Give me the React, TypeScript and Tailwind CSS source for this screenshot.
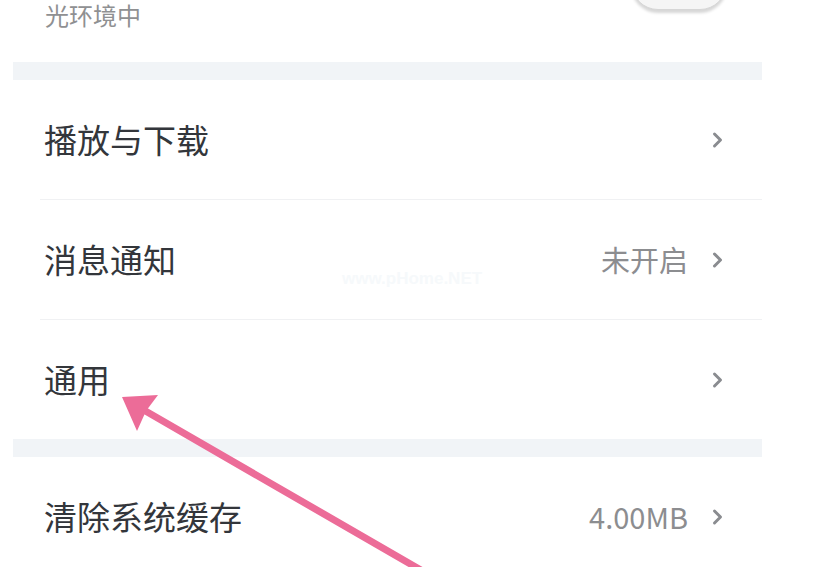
import React from "react";

type Row = { label: string; value?: string };

const groupOne: Row[] = [
  { label: "播放与下载" },
  { label: "消息通知", value: "未开启" },
  { label: "通用" },
];

const groupTwo: Row[] = [{ label: "清除系统缓存", value: "4.00MB" }];

const Chevron = () => (
  <svg width="12" height="18" viewBox="0 0 12 18" className="shrink-0">
    <polyline
      points="2.5,3 8.5,9 2.5,15"
      fill="none"
      stroke="#8a8c90"
      strokeWidth="3"
      strokeLinecap="round"
      strokeLinejoin="round"
    />
  </svg>
);

const SettingRow = ({ row }: { row: Row }) => (
  <div className="flex h-[119px] items-center pl-[31px] pr-[38px]">
    <span className="flex-1 text-[33px] leading-none text-[#33363b]">{row.label}</span>
    {row.value && (
      <span className="mr-[24px] text-[29px] leading-none text-[#8c8d90]">{row.value}</span>
    )}
    <Chevron />
  </div>
);

export default function App() {
  return (
    <div
      className="relative h-[567px] w-[817px] overflow-hidden bg-white"
      style={{ fontFamily: '"Noto Sans CJK SC", "Noto Sans", sans-serif' }}
    >
      {/* top of the previous row: subtitle and switch */}
      <div className="flex h-[62px] items-start pl-[45px] pr-[90px]">
        <span className="mt-[2px] flex-1 text-[24px] leading-[26px] text-[#8f9092]">光环境中</span>
        <div className="mt-[-44px] h-[54px] w-[96px] rounded-full border border-[#d6d6d6] bg-[#f5f5f5] shadow-[0_3px_3px_rgba(0,0,0,0.16)]" />
      </div>

      <div className="ml-[13px] h-[18px] w-[749px] bg-[#f1f4f7]" />

      <div className="ml-[13px] w-[749px]">
        {groupOne.map((row, i) => (
          <div key={row.label}>
            {i > 0 && <div className="ml-[27px] h-px bg-[#f0f1f3]" />}
            <SettingRow row={row} />
          </div>
        ))}
      </div>

      <div className="ml-[13px] h-[18px] w-[749px] bg-[#f1f4f7]" />

      <div className="ml-[13px] w-[749px]">
        {groupTwo.map((row) => (
          <SettingRow key={row.label} row={row} />
        ))}
      </div>

      {/* faint watermark */}
      <div
        className="pointer-events-none absolute left-[342px] top-[266px] text-[17px] font-bold text-[#f6f9fb]"
        style={{ fontFamily: '"Liberation Sans", Arial, sans-serif' }}
      >
        www.pHome.NET
      </div>

      {/* pink annotation arrow */}
      <svg className="pointer-events-none absolute left-0 top-0" width="817" height="567" viewBox="0 0 817 567">
        <line x1="142" y1="409" x2="445" y2="584" stroke="#ec6c98" strokeWidth="7" strokeLinecap="round" />
        <polygon points="122,397 158,395 146,411 137,431" fill="#ec6c98" />
      </svg>
    </div>
  );
}
